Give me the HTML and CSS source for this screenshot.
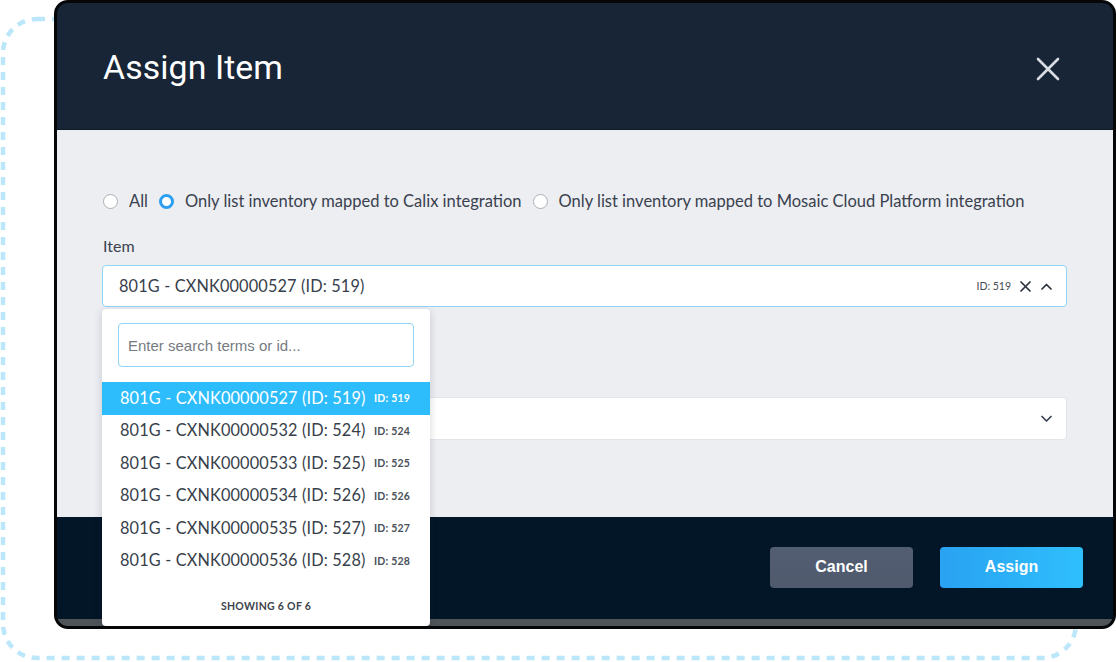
FILE: index.html
```html
<!DOCTYPE html>
<html lang="en">
<head>
<meta charset="utf-8">
<title>Assign Item</title>
<link rel="stylesheet" href="styles.css">
</head>
<body>
<div class="stage">
  <svg class="dash" width="1116" height="662" viewBox="0 0 1116 662" aria-hidden="true">
    <rect x="3" y="19" width="1073" height="639" rx="34" ry="34" fill="none" stroke="#bce6fa" stroke-width="4.5" stroke-dasharray="8 7"/>
  </svg>
  <div class="modal">
    <header class="modal-header">
      <h1 class="title">Assign Item</h1>
      <svg class="close" width="24" height="24" viewBox="0 0 24 24" aria-hidden="true">
        <path d="M2 2 L22 22 M22 2 L2 22" stroke="#d9dee4" stroke-width="2.6" stroke-linecap="round"/>
      </svg>
    </header>
    <section class="modal-body">
      <div class="radios">
        <label class="radio"><span class="dot"></span>All</label>
        <label class="radio"><span class="dot on"></span>Only list inventory mapped to Calix integration</label>
        <label class="radio"><span class="dot"></span>Only list inventory mapped to Mosaic Cloud Platform integration</label>
      </div>
      <div class="field">
        <div class="label">Item</div>
        <div class="select-wrap">
          <div class="select active">
            <span class="value">801G - CXNK00000527 (ID: 519)</span>
            <span class="id-tag">ID: 519</span>
            <svg class="clear" width="11" height="11" viewBox="0 0 11 11" aria-hidden="true">
              <path d="M1 1 L10 10 M10 1 L1 10" stroke="#2c333d" stroke-width="1.7" stroke-linecap="round"/>
            </svg>
            <svg class="chev" width="11" height="7" viewBox="0 0 11 7" aria-hidden="true">
              <path d="M1 6 L5.5 1.5 L10 6" fill="none" stroke="#2c333d" stroke-width="1.7" stroke-linecap="round" stroke-linejoin="round"/>
            </svg>
          </div>
          <div class="dropdown">
            <div class="search">Enter search terms or id...</div>
            <ul class="options">
              <li class="opt sel"><span>801G - CXNK00000527 (ID: 519)</span><small>ID: 519</small></li>
              <li class="opt"><span>801G - CXNK00000532 (ID: 524)</span><small>ID: 524</small></li>
              <li class="opt"><span>801G - CXNK00000533 (ID: 525)</span><small>ID: 525</small></li>
              <li class="opt"><span>801G - CXNK00000534 (ID: 526)</span><small>ID: 526</small></li>
              <li class="opt"><span>801G - CXNK00000535 (ID: 527)</span><small>ID: 527</small></li>
              <li class="opt"><span>801G - CXNK00000536 (ID: 528)</span><small>ID: 528</small></li>
            </ul>
            <div class="count">SHOWING 6 OF 6</div>
          </div>
        </div>
      </div>
      <div class="field second">
        <div class="label">Location</div>
        <div class="select tall">
          <span class="value"></span>
          <svg class="chev" width="11" height="7" viewBox="0 0 11 7" aria-hidden="true">
            <path d="M1 1.5 L5.5 6 L10 1.5" fill="none" stroke="#3a4250" stroke-width="1.7" stroke-linecap="round" stroke-linejoin="round"/>
          </svg>
        </div>
      </div>
    </section>
    <footer class="modal-footer">
      <button class="btn cancel">Cancel</button>
      <button class="btn assign">Assign</button>
    </footer>
    <div class="strip"></div>
  </div>
</div>
</body>
</html>
```

FILE: styles.css
```css
* { box-sizing: border-box; }
html, body { margin: 0; padding: 0; background: #ffffff; }
body { width: 1116px; height: 662px; overflow: hidden; font-family: Lato, "Liberation Sans", sans-serif; }

.stage {
  position: relative;
  width: 1116px;
  height: 662px;
  padding-left: 54px;
}
.dash { position: absolute; left: 0; top: 0; z-index: 0; }

.modal {
  position: relative;
  z-index: 1;
  width: 1062px;
  height: 629px;
  border: 3px solid #050607;
  border-radius: 14px;
  overflow: hidden;
  display: flex;
  flex-direction: column;
  background: #031627;
}

.modal-header {
  height: 127px;
  flex: none;
  background: #172536;
  display: flex;
  align-items: center;
  justify-content: space-between;
  padding: 2px 53px 0 46px;
  border-bottom: 1px solid #0d1a28;
}
.title {
  margin: 0;
  font-family: Roboto, "Liberation Sans", sans-serif;
  font-weight: 400;
  font-size: 33.8px;
  color: #ffffff;
  letter-spacing: 0.1px;
}
.close { margin-top: 4px; }

.modal-body {
  height: 387px;
  flex: none;
  background: #eceef2;
  padding: 62px 46px 0 45px;
  color: #3a414e;
}

.radios { display: flex; align-items: center; height: 18px; margin-left: 1px; }
.radio { display: flex; align-items: center; font-size: 16.5px; margin-right: 11px; white-space: nowrap; }
.dot {
  width: 15px; height: 15px;
  border-radius: 50%;
  border: 1px solid #a9adb3;
  background: #fff;
  margin-right: 11px;
  flex: none;
}
.dot.on { border: 3px solid #2c9ff2; background: #fff; }

.field { margin-top: 27px; }
.label { font-size: 16px; margin-left: 1px; line-height: 18px; margin-bottom: 10px; }

.select-wrap { position: relative; }
.select {
  height: 42px;
  background: #fff;
  border: 1px solid #e1e4e9;
  border-radius: 4px;
  display: flex;
  align-items: center;
  padding: 0 14px 0 16px;
}
.select.tall { height: 43px; }
.select.active { border-color: #8fd6f6; }
.value { flex: 1; font-size: 16.3px; color: #383f4b; letter-spacing: 0.15px; margin-top: -2px; }
.id-tag { font-size: 10.5px; color: #454b55; margin-right: 9px; }
.clear { margin-right: 10px; }

.field.second { margin-top: 62px; }

.dropdown {
  position: absolute;
  left: 0;
  top: 44px;
  width: 328px;
  height: 317px;
  background: #fff;
  border-radius: 4px;
  box-shadow: 0 2px 8px rgba(20, 30, 45, 0.18);
  z-index: 5;
  padding-top: 14px;
}
.search {
  margin: 0 16px;
  height: 44px;
  border: 1px solid #8fd6f6;
  border-radius: 4px;
  padding-left: 9px;
  display: flex;
  align-items: center;
  font-family: "Liberation Sans", Arial, sans-serif;
  font-size: 15px;
  color: #767b82;
}
.options { list-style: none; margin: 15px 0 0 0; padding: 0; }
.opt {
  height: 32.5px;
  display: flex;
  align-items: center;
  padding-left: 18px;
  color: #383f4b;
}
.opt span { font-size: 16.3px; letter-spacing: 0.15px; width: 254px; margin-top: -2px; }
.opt small { font-size: 10.5px; font-weight: 700; color: #4a505a; letter-spacing: 0.2px; }
.opt.sel { background: #2ebdfc; color: #ffffff; }
.opt.sel small { color: #ffffff; }
.count {
  margin-top: 23px;
  text-align: center;
  font-size: 10.5px;
  font-weight: 700;
  color: #3d434c;
  letter-spacing: 0.3px;
}

.modal-footer {
  flex: 1;
  background: #031627;
  display: flex;
  align-items: center;
  justify-content: flex-end;
  padding: 0 30px 2px 0;
  gap: 27px;
}
.btn {
  width: 143px;
  height: 41px;
  border: none;
  border-radius: 4px;
  font-family: "Liberation Sans", Arial, sans-serif;
  font-weight: 700;
  font-size: 16px;
  color: #ffffff;
}
.cancel { background: linear-gradient(180deg, #535d73 0%, #4f5a6c 100%); }
.assign { background: linear-gradient(90deg, #29a2f1 0%, #2fbffd 100%); }

.strip { height: 7px; flex: none; background: #4f5458; }
```
